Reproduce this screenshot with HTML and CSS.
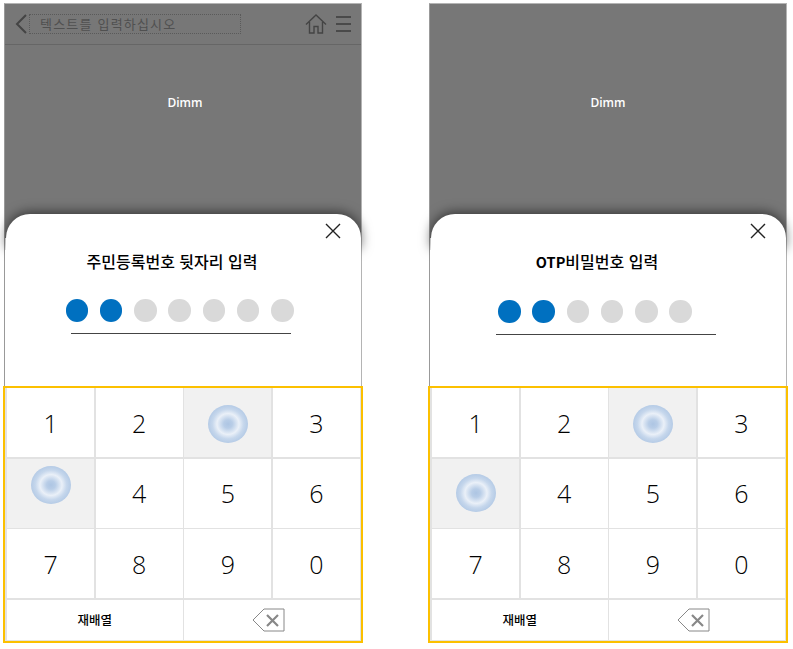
FILE: index.html
```html
<!DOCTYPE html>
<html lang="ko">

<head>
    <meta charset="UTF-8">
    <meta name="viewport" content="width=device-width, initial-scale=1.0">
    <title>Keypad</title>

    <link rel="stylesheet" href="styles.css">
</head>

<body>
    <div class="page">

        <div class="phone">
            <div class="dim">
                <div class="appbar">
                    <svg class="back" width="12" height="20" viewBox="0 0 12 20">
                        <path d="M11 1 L2 10 L11 19" fill="none" stroke="#444" stroke-width="2" />
                    </svg>
                    <div class="search">텍스트를 입력하십시오</div>
                    <svg class="home" width="22" height="20" viewBox="0 0 22 20">
                        <path d="M1 10.5 L11 1 L21 10.5 M4.5 8 V19 H9 V12.5 H13 V19 H17.5 V8" fill="none" stroke="#444" stroke-width="1.4" />
                    </svg>
                    <div class="menu"><i></i><i></i><i></i></div>
                </div>
                <div class="dimm-label label-a">Dimm</div>
            </div>
            <div class="sheet">
                <div class="sheet-top">
                    <svg width="16" height="16" viewBox="0 0 16 16">
                        <path d="M1 1 L15 15 M15 1 L1 15" fill="none" stroke="#222" stroke-width="1.4" />
                    </svg>
                </div>
                <div class="sheet-body">
                    <div class="title">주민등록번호 뒷자리 입력</div>
                    <div class="pin pin-a">
                        <i class="dot on"></i><i class="dot on"></i><i class="dot"></i><i class="dot"></i><i class="dot"></i><i class="dot"></i><i class="dot"></i>
                    </div>
                </div>
            </div>
            <div class="keypad">
                <div class="key">1</div>
                <div class="key">2</div>
                <div class="key pressed"><span class="ripple ripple-down"></span></div>
                <div class="key">3</div>
                <div class="key pressed"><span class="ripple ripple-up"></span></div>
                <div class="key">4</div>
                <div class="key">5</div>
                <div class="key">6</div>
                <div class="key">7</div>
                <div class="key">8</div>
                <div class="key">9</div>
                <div class="key">0</div>
                <div class="key wide small">재배열</div>
                <div class="key wide">
                    <svg class="del" width="33" height="24" viewBox="0 0 33 24">
                        <path d="M32 1 H12 L1 12 L12 23 H32 Z" fill="#fff" stroke="#888" stroke-width="1" />
                        <path d="M15 7 L26 18 M26 7 L15 18" fill="none" stroke="#888" stroke-width="2.2" />
                    </svg>
                </div>
            </div>
        </div>

        <div class="phone">
            <div class="dim">
                <div class="dimm-label label-b">Dimm</div>
            </div>
            <div class="sheet">
                <div class="sheet-top">
                    <svg width="16" height="16" viewBox="0 0 16 16">
                        <path d="M1 1 L15 15 M15 1 L1 15" fill="none" stroke="#222" stroke-width="1.4" />
                    </svg>
                </div>
                <div class="sheet-body">
                    <div class="title"><b>OTP</b>비밀번호 입력</div>
                    <div class="pin pin-b">
                        <i class="dot on"></i><i class="dot on"></i><i class="dot"></i><i class="dot"></i><i class="dot"></i><i class="dot"></i>
                    </div>
                </div>
            </div>
            <div class="keypad">
                <div class="key">1</div>
                <div class="key">2</div>
                <div class="key pressed"><span class="ripple ripple-down"></span></div>
                <div class="key">3</div>
                <div class="key pressed"><span class="ripple"></span></div>
                <div class="key">4</div>
                <div class="key">5</div>
                <div class="key">6</div>
                <div class="key">7</div>
                <div class="key">8</div>
                <div class="key">9</div>
                <div class="key">0</div>
                <div class="key wide small">재배열</div>
                <div class="key wide">
                    <svg class="del" width="33" height="24" viewBox="0 0 33 24">
                        <path d="M32 1 H12 L1 12 L12 23 H32 Z" fill="#fff" stroke="#888" stroke-width="1" />
                        <path d="M15 7 L26 18 M26 7 L15 18" fill="none" stroke="#888" stroke-width="2.2" />
                    </svg>
                </div>
            </div>
        </div>

    </div>
</body>

</html>
```

FILE: styles.css
```css
body {
    margin: 0;
    background-color: #fff;
    font-family: "Noto Sans CJK KR", "Noto Sans", sans-serif;
    color: #000;
    overflow: hidden;
}

.page {
    display: flex;
    gap: 67px;
    padding: 3px 0 0 4px;
}

.phone {
    width: 358px;
    box-sizing: border-box;
    border: 1px solid #b4b4b4;
    border-bottom: none;
    border-left-color: #999;
}

/* runs on behind the round corners of the sheet */
.dim {
    height: 234px;
    background-color: #777;
}

.appbar {
    height: 40px;
    display: flex;
    align-items: center;
    border-bottom: 1px solid #666;
}

.back {
    margin: 0 2px 0 10px;
}

.search {
    width: 212px;
    height: 20px;
    box-sizing: border-box;
    border: 1px dotted #5a5a5a;
    padding-left: 10px;
    font-size: 13px;
    line-height: 17px;
    letter-spacing: 1.2px;
    color: #505050;
}

.home {
    margin-left: 64px;
}

.menu {
    width: 15px;
    margin-left: 9px;
    display: flex;
    flex-direction: column;
    gap: 5px;
}

.menu i {
    height: 2px;
    background-color: #4a4a4a;
}

.dimm-label {
    font-family: "Open Sans", sans-serif;
    font-size: 12px;
    font-weight: 600;
    line-height: 16px;
    color: #fff;
    text-align: center;
}

.label-a {
    padding: 50px 0 0 4px;
}

.label-b {
    padding: 91px 0 0 0;
}

.sheet {
    height: 172px;
    margin-top: -24px;
    position: relative;
}

.sheet-top {
    height: 36px;
    box-sizing: border-box;
    margin-left: 1px;
    padding: 9px 20px 0 0;
    display: flex;
    justify-content: flex-end;
    background-color: #fff;
    border-radius: 24px 24px 0 0;
    box-shadow: 0 -2px 12px rgba(0, 0, 0, 0.55);
}

.sheet-body {
    position: relative;
    height: 136px;
    background-color: #fff;
    overflow: hidden;
}

.title {
    padding-right: 22px;
    font-size: 16px;
    font-weight: 500;
    line-height: 22px;
    text-align: center;
}

.title b {
    font-size: 14.5px;
}

.pin {
    width: 220px;
    box-sizing: border-box;
    margin: 27px 0 0 66px;
    padding-bottom: 11px;
    border-bottom: 1px solid #444;
    display: flex;
    gap: 11.8px;
}

.pin-a .dot:first-child {
    margin-left: -5.5px;
}

.pin-b .dot:first-child {
    margin-left: 2px;
}

.dot {
    flex: none;
    width: 22.5px;
    height: 22.5px;
    border-radius: 50%;
    background-color: #d9d9d9;
}

.dot.on {
    background-color: #0070c0;
}

.keypad {
    margin: 0 -2px;
    height: 257px;
    box-sizing: border-box;
    border: 2px solid #fcc000;
    padding: 0 1px 1px 2px;
    background-color: #e2e2e2;
    display: grid;
    grid-template-columns: repeat(4, 1fr);
    grid-template-rows: repeat(3, 1fr) 40px;
    gap: 1.5px;
}

.key {
    background-color: #fff;
    display: flex;
    align-items: center;
    justify-content: center;
    font-family: "Open Sans", sans-serif;
    font-size: 25px;
    font-weight: 350;
}

.key.pressed {
    background-color: #f1f1f1;
}

.key.wide {
    grid-column: span 2;
}

.key.small {
    font-family: "Noto Sans CJK KR", sans-serif;
    font-size: 12.5px;
    font-weight: 500;
}

.ripple {
    width: 40px;
    height: 38px;
    border-radius: 50%;
    background: radial-gradient(closest-side, #adc5e3 0%, #b8cde7 22%, #eaf0f8 55%, #c6d7ec 78%, #b5cbe6 100%);
}

.ripple-up {
    margin-bottom: 16px;
}

.ripple-down {
    margin-top: 3px;
}

.del {
    margin-right: 8px;
}
```
